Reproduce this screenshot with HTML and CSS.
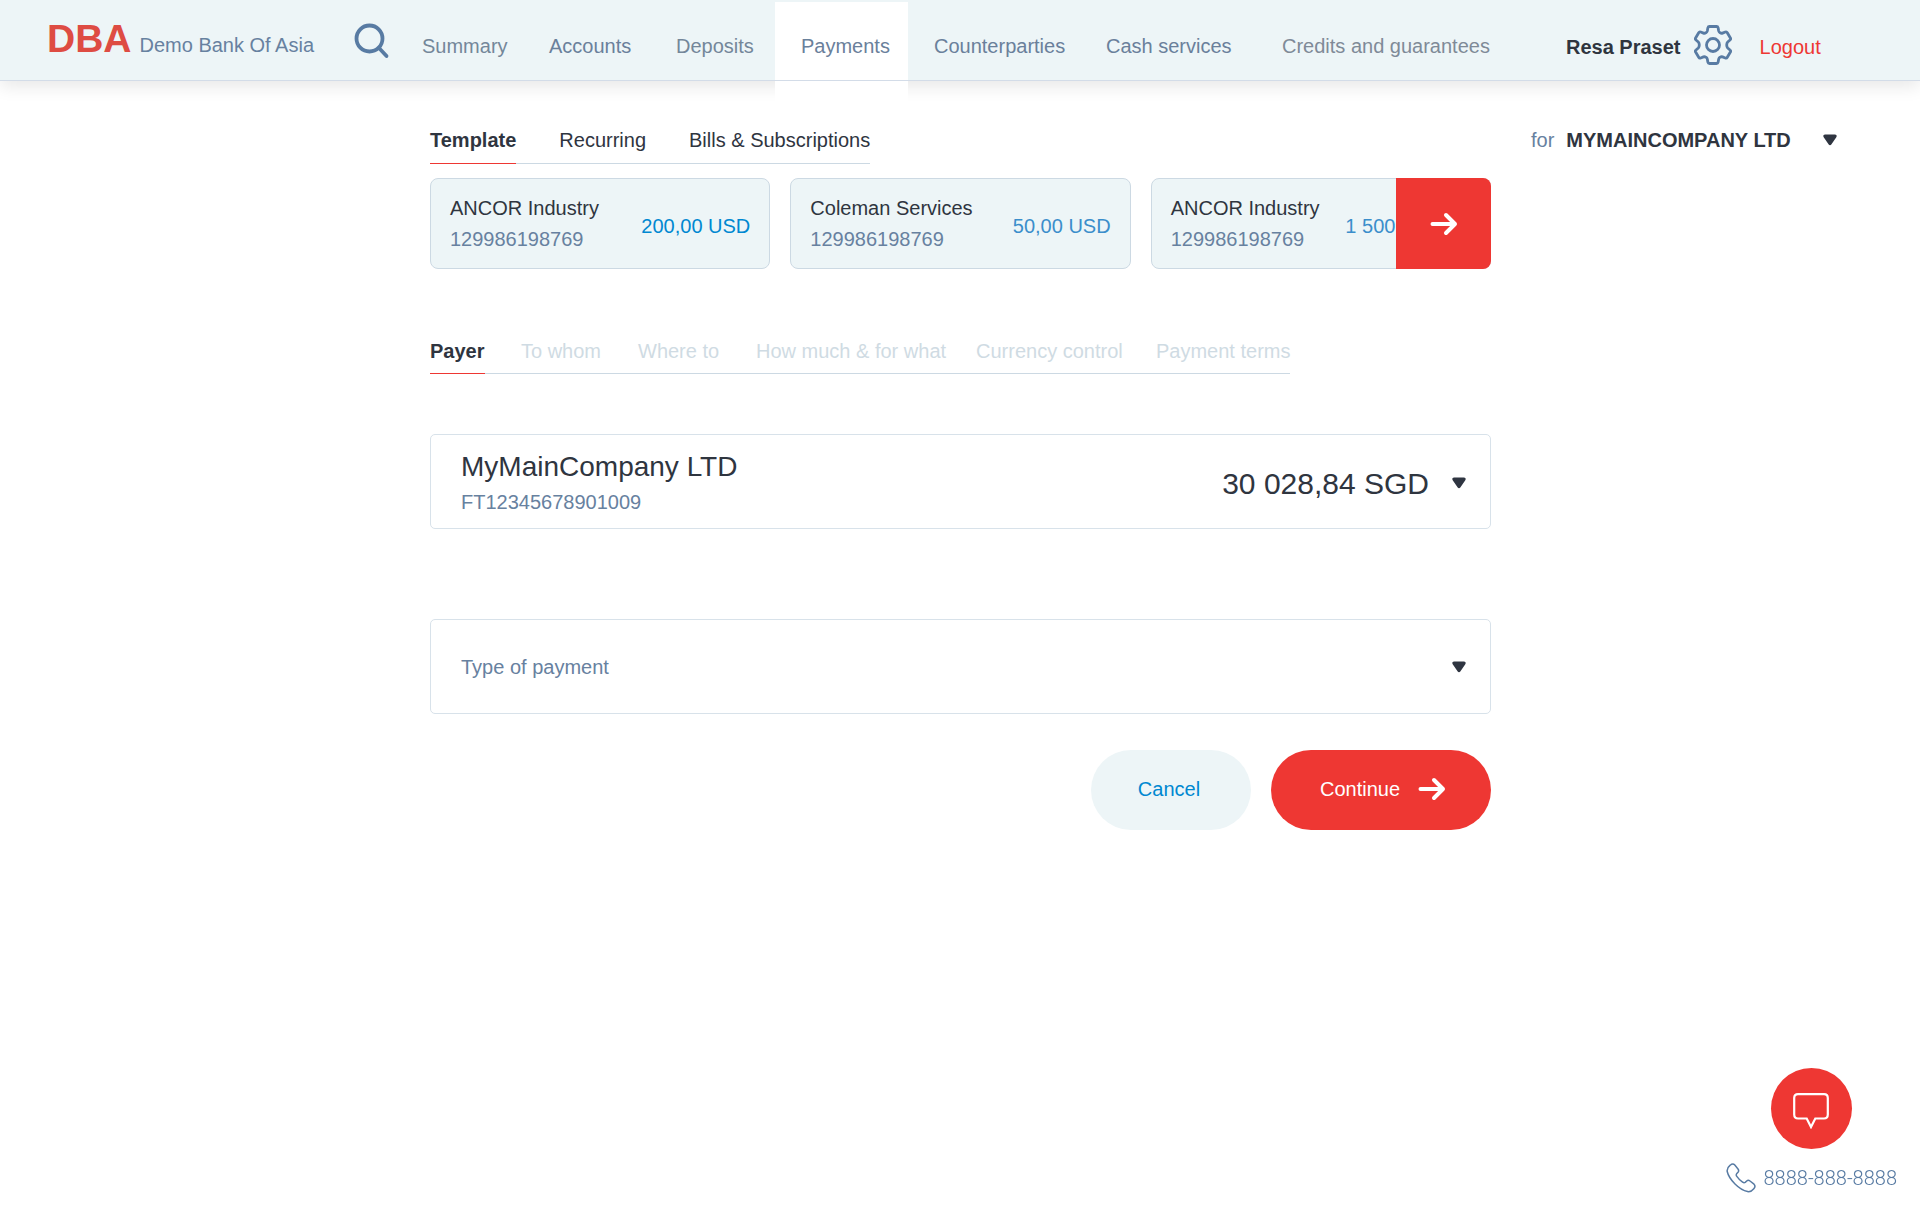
FILE: index.html
```html
<!DOCTYPE html>
<html lang="en">
<head>
  <meta charset="utf-8">
  <meta name="viewport" content="width=device-width, initial-scale=1">
  <title>Payments – Demo Bank Of Asia</title>
  <link rel="stylesheet" href="styles.css">
</head>
<body>
  <svg class="sprite" aria-hidden="true">
    <symbol id="caret" viewBox="0 0 14 12">
      <path d="M2 0.500H12C13.500 0.500 14.200 2 13.300 3.200L8.300 10.600C7.700 11.600 6.300 11.600 5.700 10.600L0.700 3.200C-0.200 2 0.500 0.500 2 0.500Z" fill="currentColor"/>
    </symbol>
    <symbol id="arrow" viewBox="0 0 28 24">
      <path d="M2.500 12H25M16 3L25 12L16 21" fill="none" stroke="currentColor" stroke-width="4" stroke-linecap="round" stroke-linejoin="round"/>
    </symbol>
  </svg>

  <header class="header">
    <div class="brand">
      <a class="logo" href="#">DBA</a>
      <span class="brand-name">Demo Bank Of Asia</span>
      <button class="search" type="button" aria-label="Search">
        <svg width="36" height="36" viewBox="0 0 36 36" fill="none" stroke="currentColor" stroke-width="3.800" stroke-linecap="round">
          <circle cx="15.500" cy="15.500" r="13"/>
          <path d="M25 25L32.500 33"/>
        </svg>
      </button>
    </div>
    <nav class="nav">
      <a href="#" class="nav-muted">Summary</a>
      <a href="#">Accounts</a>
      <a href="#" class="nav-muted">Deposits</a>
      <a href="#" class="nav-active" aria-current="page">Payments</a>
      <a href="#">Counterparties</a>
      <a href="#">Cash services</a>
      <a href="#" class="nav-grey">Credits and guarantees</a>
    </nav>
    <div class="user">
      <span class="user-name">Resa Praset</span>
      <button class="settings" type="button" aria-label="Settings">
        <svg width="38" height="40" viewBox="0 0 38 40" fill="none" stroke="currentColor" stroke-width="2.800" stroke-linejoin="round">
          <path d="M15.500 1.500H22.500Q23.800 1.500 24.100 2.800L24.700 6Q25 7.200 26 7.700Q27.300 8.600 28.500 8.100L31.300 7Q32.600 6.500 33.300 7.700L36.400 13Q37 14.200 36 15L33.700 17Q32.700 18 32.700 20Q32.700 22 33.700 23L36 25Q37 25.800 36.400 27L33.300 32.300Q32.600 33.500 31.300 33L28.500 31.900Q27.300 31.400 26 32.300Q25 32.800 24.700 34L24.100 37.200Q23.800 38.500 22.500 38.500H15.500Q14.200 38.500 13.900 37.200L13.300 34Q13 32.800 12 32.300Q10.700 31.400 9.500 31.900L6.700 33Q5.400 33.500 4.700 32.300L1.600 27Q1 25.800 2 25L4.300 23Q5.300 22 5.300 20Q5.300 18 4.300 17L2 15Q1 14.200 1.600 13L4.700 7.700Q5.400 6.500 6.700 7L9.500 8.100Q10.700 8.600 12 7.700Q13 7.200 13.300 6L13.900 2.800Q14.200 1.500 15.500 1.500Z"/>
          <circle cx="19" cy="20" r="6.500"/>
        </svg>
      </button>
      <a class="logout" href="#">Logout</a>
    </div>
  </header>

  <main class="page">
    <div class="content">
      <nav class="tabs" aria-label="Payment lists">
        <a href="#" class="tab tab-active">Template</a>
        <a href="#" class="tab">Recurring</a>
        <a href="#" class="tab">Bills &amp; Subscriptions</a>
      </nav>

      <section class="templates" aria-label="Templates">
        <a href="#" class="card">
          <span class="card-text"><span>ANCOR Industry</span><span class="card-number">129986198769</span></span>
          <span class="card-amount card-amount-strong">200,00 USD</span>
        </a>
        <a href="#" class="card">
          <span class="card-text"><span>Coleman Services</span><span class="card-number">129986198769</span></span>
          <span class="card-amount">50,00 USD</span>
        </a>
        <a href="#" class="card">
          <span class="card-text"><span>ANCOR Industry</span><span class="card-number">129986198769</span></span>
          <span class="card-amount">1 500,00 USD</span>
        </a>
        <button class="next" type="button" aria-label="Next templates"><svg width="28" height="24"><use href="#arrow"/></svg></button>
      </section>

      <ol class="steps">
        <li class="step step-active"><span>Payer</span></li>
        <li class="step">To whom</li>
        <li class="step">Where to</li>
        <li class="step">How much &amp; for what</li>
        <li class="step">Currency control</li>
        <li class="step">Payment terms</li>
      </ol>

      <form class="form">
        <button class="field account" type="button" aria-haspopup="listbox">
          <span class="account-text">
            <span class="account-name">MyMainCompany LTD</span>
            <span class="account-number">FT12345678901009</span>
          </span>
          <span class="account-balance">30 028,84 SGD</span>
          <svg class="caret" width="14" height="12"><use href="#caret"/></svg>
        </button>
        <div class="picker">
          <select class="field payment-type" aria-label="Type of payment">
            <option>Type of payment</option>
          </select>
          <svg class="caret picker-caret" width="14" height="12"><use href="#caret"/></svg>
        </div>
        <div class="actions">
          <button class="btn btn-cancel" type="button">Cancel</button>
          <button class="btn btn-continue" type="submit">Continue <svg width="28" height="24"><use href="#arrow"/></svg></button>
        </div>
      </form>
    </div>

    <div class="company">
      <label for="company">for</label>
      <div class="picker">
        <select id="company" class="company-select">
          <option>MYMAINCOMPANY LTD</option>
        </select>
        <svg class="caret company-caret" width="14" height="12"><use href="#caret"/></svg>
      </div>
    </div>
  </main>

  <aside class="contact">
    <button class="chat" type="button" aria-label="Open chat">
      <svg width="36" height="36" viewBox="0 0 36 36" fill="none" stroke="currentColor" stroke-width="2.200">
        <path d="M5 1.200H31Q34.800 1.200 34.800 5V21.500Q34.800 25.500 31 25.500H22.300L18 34L13.700 25.500H5Q1.200 25.500 1.200 21.500V5Q1.200 1.200 5 1.200Z"/>
      </svg>
    </button>
    <a class="phone" href="tel:88888888888">
      <svg width="30" height="30" viewBox="0 0 30 30" fill="none" stroke="currentColor" stroke-width="1.500" stroke-linejoin="round">
        <path d="M4.200 2.200Q6.800 0 8.800 2L12 6Q13.300 7.800 12 9.300L10.600 10.800Q9.800 12 10.800 13.400Q13.200 16.900 16.600 19.200Q18 20.200 19.200 19.400L20.700 18Q22.200 16.700 24 18L28 21.200Q30 23.200 27.800 25.800Q25 29.300 21.500 28.600Q15.500 27.400 9 21Q2.600 14.500 1.200 8.500Q0.700 5 4.200 2.200Z"/>
      </svg>
      8888-888-8888
    </a>
  </aside>
</body>
</html>
```
FILE: styles.css
```css
:root {
  --ink: #2f353f;
  --slate: #6781a0;
  --steel: #587ba3;
  --mist: #edf5f7;
  --line: #ccd9e3;
  --red: #ee3733;
  --blue: #0088d1;
}

* {
  box-sizing: border-box;
}

body {
  margin: 0;
  min-height: 100vh;
  background: #fff;
  color: var(--ink);
  font: 20px/24px "Liberation Sans", Arial, sans-serif;
}

a {
  color: inherit;
  text-decoration: none;
}

button,
select {
  margin: 0;
  padding: 0;
  border: 0;
  background: none;
  color: inherit;
  font: inherit;
  cursor: pointer;
}

select {
  appearance: none;
}

svg {
  display: block;
  flex: none;
}

.sprite {
  position: absolute;
  width: 0;
  height: 0;
}

/* Header */
.header {
  display: grid;
  grid-template-columns: minmax(max-content, 396fr) auto minmax(max-content, 430fr);
  border-bottom: 1px solid #d3dce8;
  background: var(--mist);
  box-shadow: 0 6px 16px rgba(0, 0, 0, 0.09);
}

.brand {
  display: flex;
  align-items: baseline;
  gap: 8px;
  padding: 19px 6px 0 47px;
  color: var(--slate);
}

.logo {
  color: #de4c43;
  font-size: 39px;
  line-height: 40px;
  font-weight: bold;
}

.search {
  align-self: flex-start;
  margin: 4px 0 0 auto;
  color: var(--steel);
}

.nav {
  display: grid;
  grid-template-columns: 127px 127px 125px 133px 172px 176px 234px;
  padding-top: 2px;
  color: #6a809b;
}

.nav a {
  padding: 32px 0 22px 26px;
  white-space: nowrap;
}

.nav .nav-muted {
  color: #74879a;
}

.nav .nav-grey {
  color: #7f8a97;
}

.nav .nav-active {
  position: relative;
  background: #fff;
}

/* Keeps the header shadow off the open tab */
.nav-active::after {
  content: "";
  position: absolute;
  top: calc(100% + 1px);
  left: 0;
  width: 100%;
  height: 24px;
  background: #fff;
}

.user {
  display: flex;
  align-items: flex-start;
  padding: 25px 0 0 76px;
}

.user-name,
.logout {
  padding-top: 10px;
  white-space: nowrap;
}

.user-name {
  font-weight: bold;
}

.settings {
  margin: 0 28px 0 13px;
  color: var(--steel);
}

.logout {
  color: var(--red);
}

/* Page */
.page {
  display: grid;
  grid-template-columns: minmax(0, 430fr) minmax(0, 1061px) minmax(max-content, 429fr);
  align-items: start;
  padding: 47px 0 120px;
}

.content {
  grid-column: 2;
}

.company {
  display: flex;
  gap: 12px;
  padding-left: 40px;
  color: var(--slate);
}

.picker {
  display: grid;
  align-items: center;
}

.picker > * {
  grid-area: 1 / 1;
}

.caret {
  color: #2f3541;
  pointer-events: none;
}

.company-select {
  width: 271px;
  height: 24px;
  color: var(--ink);
  font-weight: bold;
}

.company-caret,
.picker-caret {
  justify-self: end;
}

.tabs {
  display: flex;
  gap: 43px;
  width: fit-content;
  border-bottom: 1px solid var(--line);
}

.tab {
  margin-bottom: -1px;
  padding-bottom: 11px;
  border-bottom: 1px solid transparent;
}

.tab-active {
  border-color: var(--red);
  font-weight: bold;
}

.templates {
  position: relative;
  display: grid;
  grid-template-columns: repeat(3, minmax(0, 1fr));
  gap: 20px;
  margin-top: 14px;
}

.card {
  display: flex;
  justify-content: space-between;
  align-items: center;
  padding: 14px 19px 13px;
  border: 1px solid var(--line);
  border-radius: 8px;
  background: var(--mist);
  line-height: 31px;
  white-space: nowrap;
}

.card-text {
  display: grid;
}

.card-number {
  color: var(--slate);
}

.card-amount {
  padding-top: 4px;
  color: #3b8ecb;
}

.card-amount-strong {
  color: var(--blue);
}

.next {
  position: absolute;
  top: 0;
  right: 0;
  display: grid;
  place-items: center;
  width: 95px;
  height: 100%;
  border-radius: 0 8px 8px 0;
  background: var(--red);
  color: #fff;
}

.steps {
  display: grid;
  grid-template-columns: 91px 117px 118px 220px 180px auto;
  width: fit-content;
  margin: 70px 0 60px;
  padding: 0;
  border-bottom: 1px solid var(--line);
  color: #cfdbe3;
  list-style: none;
  white-space: nowrap;
}

.step {
  padding-bottom: 10px;
}

.step-active {
  margin-bottom: -1px;
  padding: 0;
  color: var(--ink);
  font-weight: bold;
}

.step-active span {
  display: inline-block;
  padding-bottom: 10px;
  border-bottom: 1px solid var(--red);
}

.field {
  width: 100%;
  border: 1px solid #d8e2ea;
  border-radius: 5px;
}

.account {
  display: flex;
  align-items: center;
  gap: 23px;
  padding: 16px 24px 14px 30px;
  text-align: left;
}

.account-text {
  display: grid;
  gap: 7px;
  margin-right: auto;
}

.account-name {
  font-size: 28px;
  line-height: 32px;
}

.account-number {
  color: var(--slate);
}

.account-balance {
  padding-top: 2px;
  font-size: 30px;
  line-height: 32px;
}

.form .picker {
  margin-top: 90px;
}

.payment-type {
  height: 95px;
  padding: 0 48px 0 30px;
  color: var(--slate);
}

.picker-caret {
  margin-right: 25px;
}

.actions {
  display: flex;
  justify-content: flex-end;
  gap: 20px;
  margin-top: 36px;
}

.btn {
  display: flex;
  justify-content: center;
  align-items: center;
  gap: 18px;
  height: 80px;
  padding-bottom: 2px;
  border-radius: 40px;
}

.btn-cancel {
  width: 160px;
  padding-right: 4px;
  background: var(--mist);
  color: var(--blue);
}

.btn-continue {
  width: 220px;
  padding-left: 4px;
  background: var(--red);
  color: #fff;
}

/* Contact shortcuts float over the page corner */
.contact {
  position: fixed;
  right: 23px;
  bottom: 14px;
  display: grid;
  justify-items: center;
  gap: 14px;
}

.chat {
  display: grid;
  place-items: center;
  width: 81px;
  height: 81px;
  padding-top: 4px;
  border-radius: 50%;
  background: var(--red);
  color: #fff;
}

.phone {
  display: flex;
  align-items: center;
  gap: 8px;
  color: var(--steel);
  font-family: Roboto, "Liberation Sans", sans-serif;
  font-weight: 300;
}
```
